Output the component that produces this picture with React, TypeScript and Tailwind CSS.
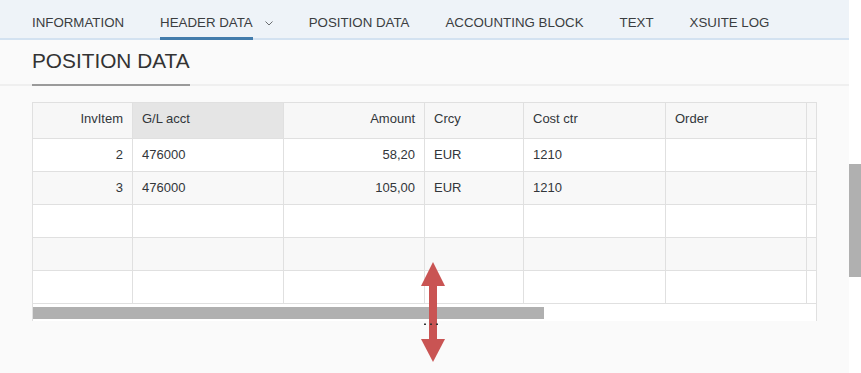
import React from 'react';

const tabs = [
  { label: 'INFORMATION' },
  { label: 'HEADER DATA', active: true, menu: true },
  { label: 'POSITION DATA' },
  { label: 'ACCOUNTING BLOCK' },
  { label: 'TEXT' },
  { label: 'XSUITE LOG' },
];

const columns = [
  { label: 'InvItem', right: true },
  { label: 'G/L acct', selected: true },
  { label: 'Amount', right: true },
  { label: 'Crcy' },
  { label: 'Cost ctr' },
  { label: 'Order' },
  { label: '' },
];

const rows: string[][] = [
  ['2', '476000', '58,20', 'EUR', '1210', '', ''],
  ['3', '476000', '105,00', 'EUR', '1210', '', ''],
  ['', '', '', '', '', '', ''],
  ['', '', '', '', '', '', ''],
  ['', '', '', '', '', '', ''],
];

const gridCols = 'grid grid-cols-[100px_151px_141px_99px_142px_141px_10px]';

function ResizeArrow() {
  return (
    <svg className="absolute left-[421px] top-[262px]" width="24" height="100" viewBox="0 0 24 100">
      <polygon points="12,0 24,24 0,24" fill="#c95453" />
      <rect x="8" y="23" width="8" height="55" fill="#c95453" />
      <polygon points="0,77 24,77 12,100" fill="#c95453" />
      <rect x="3" y="61.5" width="2" height="1.5" fill="#333" />
      <rect x="9" y="61.5" width="2" height="1.5" fill="#333" />
      <rect x="15" y="61.5" width="2" height="1.5" fill="#333" />
    </svg>
  );
}

export default function App() {
  return (
    <div className="flex h-[373px] w-[861px] overflow-hidden bg-[#fafafa] font-['Liberation_Sans',Arial,sans-serif] text-[#32363a]">
      <div className="relative w-[849px] flex flex-col">
        {/* Tab bar */}
        <nav className="flex h-[40px] gap-[36px] border-b-2 border-[#d3e2f1] bg-[#eef3f8] pl-[32px] text-[13.3px] leading-[16px]">
          {tabs.map((tab) => (
            <div key={tab.label} className="relative flex items-start gap-[12px] pt-[15px]">
              <span className="text-[#3a3d40]">{tab.label}</span>
              {tab.menu && (
                <svg width="8" height="16" viewBox="0 0 8 16" className="mt-[1px]">
                  <polyline points="0.5,5.5 4,9 7.5,5.5" fill="none" stroke="#6a6d70" strokeWidth="1" />
                </svg>
              )}
              {tab.active && (
                <span className="absolute left-0 right-[20px] -bottom-[2px] h-[3px] bg-[#427cac]" />
              )}
            </div>
          ))}
        </nav>

        {/* Section title */}
        <div className="border-b-2 border-[#efefef] pl-[32px] pt-[9px]">
          <h2 className="-mb-[2px] inline-block border-b-2 border-[#9a9a9a] pb-[11px] text-[20.8px] leading-[24px] text-[#333]">
            POSITION DATA
          </h2>
        </div>

        {/* Table */}
        <div className="ml-[32px] mt-[16px] w-[785px] border-l border-t border-[#e0e0e0] text-[13px]">
          <div className={gridCols}>
            {columns.map((col, i) => (
              <div
                key={i}
                className={`flex h-[36px] min-w-0 items-center border-b border-r border-[#e0e0e0] pb-[3px] ${
                  i === 6 ? '' : 'px-[9px]'
                } ${col.right ? 'justify-end' : ''} ${col.selected ? 'bg-[#e5e5e5]' : 'bg-[#f7f7f7]'}`}
              >
                {col.label}
              </div>
            ))}
          </div>
          {rows.map((row, r) => (
            <div key={r} className={`${gridCols} ${r % 2 === 1 ? 'bg-[#f8f8f8]' : 'bg-white'}`}>
              {row.map((cell, c) => (
                <div
                  key={c}
                  className={`flex h-[33px] min-w-0 items-center border-b border-r border-[#e0e0e0] ${
                    c === 6 ? '' : 'px-[9px]'
                  } ${columns[c].right ? 'justify-end' : ''}`}
                >
                  {cell}
                </div>
              ))}
            </div>
          ))}
          {/* horizontal scrollbar */}
          <div className="h-[17px] border-r border-[#e0e0e0] bg-white pt-[3px]">
            <div className="h-[12px] w-[511px] bg-[#b0b0b0]" />
          </div>
        </div>

        <ResizeArrow />
      </div>

      {/* vertical scrollbar */}
      <div className="w-[12px] bg-white pt-[164px]">
        <div className="h-[113px] bg-[#b0b0b0]" />
      </div>
    </div>
  );
}
